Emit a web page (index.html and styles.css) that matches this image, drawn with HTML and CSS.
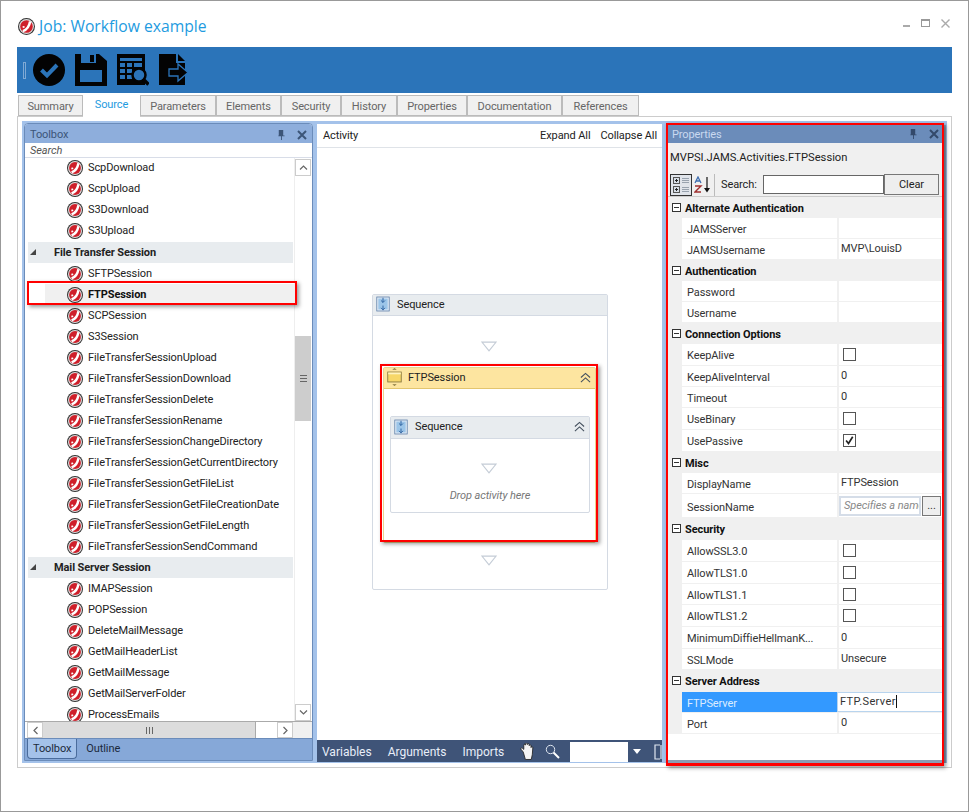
FILE: index.html
```html
<html>
    <head>
        <meta charset="utf-8">
        <title>Job: Workflow example</title>
        <link rel="stylesheet" href="styles.css">
    </head>
    <body>
        <svg class="defs" width="0" height="0">
            <symbol id="jams" viewBox="0 0 16 16">
                <circle cx="8" cy="8" r="8" fill="#333"/>
                <circle cx="8" cy="8" r="7" fill="#ddd"/>
                <circle cx="8" cy="8" r="5.900" fill="#cf1f2a"/>
                <path d="M11.400 3.200C10.800 7 9 10.800 4.600 12.400" fill="none" stroke="#fff" stroke-width="2.400"/>
                <path d="M4.400 8.600l1.800-.4" stroke="#fff" stroke-width="1.600"/>
            </symbol>
            <symbol id="seq" viewBox="0 0 18 20">
                <rect x="1" y="1" width="16" height="18" fill="#dfeaf6" stroke="#5f7fa8"/>
                <rect x="3" y="3" width="12" height="14" fill="#9cc5e8"/>
                <path d="M9 2v6M6.500 5.500L9 8l2.500-2.500M9 12v6M6.500 15L9 17.500l2.500-2.500" fill="none" stroke="#2a5f9e" stroke-width="1.200"/>
            </symbol>
            <symbol id="chev" viewBox="0 0 14 12">
                <path d="M2 6l5-4.500L12 6M2 11l5-4.500 5 4.500" fill="none" stroke="#44505e" stroke-width="1.200"/>
            </symbol>
            <symbol id="arrow" viewBox="0 0 18 12">
                <path d="M1 1h16L9 11z" fill="#fff" stroke="#c4ccd6" stroke-width="1.300"/>
            </symbol>
            <symbol id="tick" viewBox="0 0 13 13">
                <path d="M2.500 6.500l2.800 3.500 5-8" fill="none" stroke="#222" stroke-width="2"/>
            </symbol>
        </svg>

        <div class="window">
            <div class="title">
                <svg class="title_icon"><use href="#jams"/></svg>
                <span class="title_text">Job: Workflow example</span>
                <div class="win_btns">
                    <span class="win_min"></span>
                    <span class="win_max"></span>
                    <svg class="win_close" viewBox="0 0 9 9"><path d="M.500.500l8 8M8.500.500l-8 8" stroke="#aaa" stroke-width="1.400"/></svg>
                </div>
            </div>

            <div class="toolbar">
                <span class="grip"></span>
                <svg class="tool" viewBox="0 0 32 32">
                    <circle cx="16" cy="16" r="16" fill="#030303"/>
                    <path d="M8.500 16l5.500 5.500L24 11" fill="none" stroke="#2b74b9" stroke-width="4"/>
                </svg>
                <svg class="tool" viewBox="0 0 32 32">
                    <path d="M0 0h24l8 7v25H0z" fill="#030303"/>
                    <path d="M6 0h15v9H6z" fill="#2b74b9"/>
                    <path d="M15 1h4v7h-4z" fill="#030303"/>
                    <path d="M5 16h22v12H5z" fill="#2b74b9"/>
                </svg>
                <svg class="tool" viewBox="0 0 32 32">
                    <path d="M0 0h28v31H0z" fill="#030303"/>
                    <path d="M3 4h22v3H3zM3 9h5v4H3zM10 9h5v4h-5zM17 9h8v4h-8zM3 15h5v4H3zM3 21h5v4H3zM10 15h5v4h-5zM10 21h5v4h-5z" fill="#2b74b9"/>
                    <circle cx="22" cy="21" r="6.500" fill="#2b74b9" stroke="#030303" stroke-width="2.500"/>
                    <path d="M26 25l5.500 5.500" stroke="#030303" stroke-width="3.500"/>
                </svg>
                <svg class="tool tool_last" viewBox="0 0 32 32">
                    <path d="M0 0h17v9h9v22H0z" fill="#030303"/>
                    <path d="M19 0l7 7h-7z" fill="#030303"/>
                    <path d="M10 15h9v-5l10 8.500L19 27v-5h-9z" fill="#030303" stroke="#2b74b9" stroke-width="1.300"/>
                </svg>
            </div>

            <div class="tabs">
                <div class="tab" style="width:65px">Summary</div>
                <div class="tab active" style="width:57px">Source</div>
                <div class="tab" style="width:76px">Parameters</div>
                <div class="tab" style="width:65px">Elements</div>
                <div class="tab" style="width:60px">Security</div>
                <div class="tab" style="width:56px">History</div>
                <div class="tab" style="width:70px">Properties</div>
                <div class="tab" style="width:95px">Documentation</div>
                <div class="tab" style="width:77px">References</div>
            </div>

            <div class="frame">
                <div class="panes">
                    <div class="toolbox">
                        <div class="pane_head">
                            <span>Toolbox</span>
                            <svg class="pin" viewBox="0 0 9 11"><path d="M2 0h5v6h1.500v1h-3v4h-1V7h-3V6H2z" fill="#3c5578"/></svg>
                            <svg class="pane_x" viewBox="0 0 10 10"><path d="M1 1l8 8M9 1l-8 8" stroke="#3c5578" stroke-width="2"/></svg>
                        </div>
                        <div class="search">Search</div>
                        <div class="tree_wrap">
                            <div class="tree">
                                <div class="row"><svg><use href="#jams"/></svg>ScpDownload</div>
                                <div class="row"><svg><use href="#jams"/></svg>ScpUpload</div>
                                <div class="row"><svg><use href="#jams"/></svg>S3Download</div>
                                <div class="row"><svg><use href="#jams"/></svg>S3Upload</div>
                                <div class="group first"><i></i>File Transfer Session</div>
                                <div class="row"><svg><use href="#jams"/></svg>SFTPSession</div>
                                <div class="row sel"><svg><use href="#jams"/></svg>FTPSession</div>
                                <div class="row"><svg><use href="#jams"/></svg>SCPSession</div>
                                <div class="row"><svg><use href="#jams"/></svg>S3Session</div>
                                <div class="row"><svg><use href="#jams"/></svg>FileTransferSessionUpload</div>
                                <div class="row"><svg><use href="#jams"/></svg>FileTransferSessionDownload</div>
                                <div class="row"><svg><use href="#jams"/></svg>FileTransferSessionDelete</div>
                                <div class="row"><svg><use href="#jams"/></svg>FileTransferSessionRename</div>
                                <div class="row"><svg><use href="#jams"/></svg>FileTransferSessionChangeDirectory</div>
                                <div class="row"><svg><use href="#jams"/></svg>FileTransferSessionGetCurrentDirectory</div>
                                <div class="row"><svg><use href="#jams"/></svg>FileTransferSessionGetFileList</div>
                                <div class="row"><svg><use href="#jams"/></svg>FileTransferSessionGetFileCreationDate</div>
                                <div class="row"><svg><use href="#jams"/></svg>FileTransferSessionGetFileLength</div>
                                <div class="row"><svg><use href="#jams"/></svg>FileTransferSessionSendCommand</div>
                                <div class="group"><i></i>Mail Server Session</div>
                                <div class="row"><svg><use href="#jams"/></svg>IMAPSession</div>
                                <div class="row"><svg><use href="#jams"/></svg>POPSession</div>
                                <div class="row"><svg><use href="#jams"/></svg>DeleteMailMessage</div>
                                <div class="row"><svg><use href="#jams"/></svg>GetMailHeaderList</div>
                                <div class="row"><svg><use href="#jams"/></svg>GetMailMessage</div>
                                <div class="row"><svg><use href="#jams"/></svg>GetMailServerFolder</div>
                                <div class="row"><svg><use href="#jams"/></svg>ProcessEmails</div>
                            </div>
                            <div class="vscroll">
                                <div class="sbtn"><svg viewBox="0 0 9 5"><path d="M1 4.500L4.500 1 8 4.500" fill="none" stroke="#666" stroke-width="1.200"/></svg></div>
                                <div class="vthumb"><b></b></div>
                                <div class="sbtn down"><svg viewBox="0 0 9 5"><path d="M1 .500L4.500 4 8 .500" fill="none" stroke="#666" stroke-width="1.200"/></svg></div>
                            </div>
                        </div>
                        <div class="hscroll">
                            <div class="hbtn"><svg viewBox="0 0 5 9"><path d="M4.500 1L1 4.500 4.500 8" fill="none" stroke="#666" stroke-width="1.200"/></svg></div>
                            <div class="hthumb"><b></b></div>
                            <div class="hbtn right"><svg viewBox="0 0 5 9"><path d="M.500 1L4 4.500 .500 8" fill="none" stroke="#666" stroke-width="1.200"/></svg></div>
                            <div class="corner"></div>
                        </div>
                        <div class="box_tabs">
                            <div class="box_tab on">Toolbox</div>
                            <div class="box_tab">Outline</div>
                        </div>
                    </div>

                    <div class="designer">
                        <div class="des_head">
                            <span>Activity</span>
                            <span class="des_links">Expand All</span>
                            <span>Collapse All</span>
                        </div>
                        <div class="canvas">
                            <div class="card outer">
                                <div class="card_head">
                                    <svg class="seq"><use href="#seq"/></svg>Sequence
                                </div>
                                <svg class="drop top"><use href="#arrow"/></svg>
                                <div class="card ftp">
                                    <div class="card_head yellow">
                                        <svg class="box_icon" viewBox="0 0 16 20">
                                            <path d="M8 0L5.500 2h5zM8 20l-2.500-2h5z" fill="#8a7a40"/>
                                            <rect x=".5" y="4.500" width="15" height="11" fill="#f7d768" stroke="#8a7a40"/>
                                            <path d="M1 5h14v2H1z" fill="#fff3c0"/>
                                        </svg>
                                        FTPSession
                                        <svg class="chev"><use href="#chev"/></svg>
                                    </div>
                                    <div class="ftp_body">
                                        <div class="card inner">
                                            <div class="card_head">
                                                <svg class="seq"><use href="#seq"/></svg>Sequence
                                                <svg class="chev"><use href="#chev"/></svg>
                                            </div>
                                            <svg class="drop mid"><use href="#arrow"/></svg>
                                            <div class="drop_text">Drop activity here</div>
                                        </div>
                                    </div>
                                </div>
                                <svg class="drop end"><use href="#arrow"/></svg>
                            </div>
                        </div>
                        <div class="des_bar">
                            <span class="bar_var">Variables</span>
                            <span class="bar_arg">Arguments</span>
                            <span class="bar_imp">Imports</span>
                            <svg class="hand" viewBox="1 .5 13 16">
                                <path d="M3.500 9L1.500 6.500c-.8-1 .5-2 1.300-1L4 6.500V2.500c0-1.200 1.500-1.200 1.500 0V1.500c0-1.200 1.800-1.200 1.800 0V2c0-1.200 1.800-1.200 1.800 0v1c0-1 1.700-1 1.700 0v1.800c.3-1.400 1.800-1 1.700.2l-.5 6.500-1 4.500H5.500z" fill="#f4f4f4" stroke="#222" stroke-width=".8"/>
                            </svg>
                            <svg class="mag" viewBox="0 0 15 15">
                                <circle cx="5.500" cy="5.500" r="4.200" fill="none" stroke="#dfe6f0" stroke-width="1"/>
                                <path d="M8.500 8.500l5.500 5.500" stroke="#fff" stroke-width="2"/>
                            </svg>
                            <span class="zoom_box"></span>
                            <span class="zoom_arrow"></span>
                            <svg class="fit" viewBox="0 0 8 16"><path d="M6 1H1v14h5M7 1v14" fill="none" stroke="#dfe6f0" stroke-width="1.200"/></svg>
                        </div>
                    </div>

                    <div class="props">
                        <div class="pane_head dark">
                            <span>Properties</span>
                            <svg class="pin" viewBox="0 0 9 11"><path d="M2 0h5v6h1.500v1h-3v4h-1V7h-3V6H2z" fill="#33496b"/></svg>
                            <svg class="pane_x" viewBox="0 0 10 10"><path d="M1 1l8 8M9 1l-8 8" stroke="#33496b" stroke-width="2"/></svg>
                        </div>
                        <div class="prop_type">MVPSI.JAMS.Activities.FTPSession</div>
                        <div class="prop_tools">
                            <div class="cat_btn">
                                <svg viewBox="0 0 16 16">
                                    <path d="M0 0h7v7H0zM0 9h7v7H0z" fill="#555"/>
                                    <path d="M1 1h5v5H1zM1 10h5v5H1z" fill="#d7dee6"/>
                                    <path d="M2 3h3v1H2zM3 2h1v3H3zM2 12h3v1H2zM3 11h1v3H3z" fill="#222"/>
                                    <path d="M9 1h7v1H9zM9 3h7v1H9zM9 5h7v1H9zM9 10h7v1H9zM9 12h7v1H9zM9 14h7v1H9z" fill="#98a2ae"/>
                                </svg>
                            </div>
                            <svg class="az" viewBox="0 0 18 17">
                                <path d="M1 7l3-6 3 6M2 5h4" fill="none" stroke="#3f6fb0" stroke-width="1.300"/>
                                <path d="M1 10h6l-6 6h6" fill="none" stroke="#a03030" stroke-width="1.400"/>
                                <path d="M13 1v12" stroke="#111" stroke-width="1.200"/>
                                <path d="M10 12h6l-3 4.500z" fill="#111"/>
                            </svg>
                            <span class="sep"></span>
                            <span class="search_lbl">Search:</span>
                            <span class="search_box"></span>
                            <span class="clear">Clear</span>
                        </div>
                        <div class="prop_list">
                            <div class="pg"><i></i>Alternate Authentication</div>
                            <div class="pr"><span>JAMSServer</span><span></span></div>
                            <div class="pr"><span>JAMSUsername</span><span>MVP\LouisD</span></div>
                            <div class="pg"><i></i>Authentication</div>
                            <div class="pr"><span>Password</span><span></span></div>
                            <div class="pr"><span>Username</span><span></span></div>
                            <div class="pg"><i></i>Connection Options</div>
                            <div class="pr tall"><span>KeepAlive</span><span><b class="chk"></b></span></div>
                            <div class="pr"><span>KeepAliveInterval</span><span>0</span></div>
                            <div class="pr"><span>Timeout</span><span>0</span></div>
                            <div class="pr tall"><span>UseBinary</span><span><b class="chk"></b></span></div>
                            <div class="pr tall"><span>UsePassive</span><span><b class="chk"><svg><use href="#tick"/></svg></b></span></div>
                            <div class="pg"><i></i>Misc</div>
                            <div class="pr"><span>DisplayName</span><span>FTPSession</span></div>
                            <div class="pr session">
                                <span>SessionName</span>
                                <span class="sess_cell"><span class="sess_in">Specifies a name</span><span class="dots">...</span></span>
                            </div>
                            <div class="pg tall"><i></i>Security</div>
                            <div class="pr tall"><span>AllowSSL3.0</span><span><b class="chk"></b></span></div>
                            <div class="pr tall"><span>AllowTLS1.0</span><span><b class="chk"></b></span></div>
                            <div class="pr"><span>AllowTLS1.1</span><span><b class="chk"></b></span></div>
                            <div class="pr tall"><span>AllowTLS1.2</span><span><b class="chk"></b></span></div>
                            <div class="pr tall"><span>MinimumDiffieHellmanK...</span><span>0</span></div>
                            <div class="pr"><span>SSLMode</span><span>Unsecure</span></div>
                            <div class="pg tall"><i></i>Server Address</div>
                            <div class="pr editing"><span>FTPServer</span><span><em>FTP.Server</em></span></div>
                            <div class="pr"><span>Port</span><span>0</span></div>
                        </div>
                    </div>
                </div>
            </div>

            <div class="mark mark_row"></div>
            <div class="mark mark_ftp"></div>
            <div class="mark mark_props"></div>
        </div>
    </body>
</html>
```

FILE: styles.css
```css
html, body{
    margin: 0;
    padding: 0;
    background: #fff;
}
body{
    font-family: Roboto, sans-serif;
    font-size: 11px;
    letter-spacing: -.1px;
    color: #222;
    overflow: hidden;
}
.defs{
    position: absolute;
}
svg{
    display: block;
    flex: none;
}
.window{
    position: relative;
    width: 969px;
    height: 812px;
    box-sizing: border-box;
    border: 1px solid #999;
    display: flex;
    flex-direction: column;
}

/* title */
.title{
    height: 46px;
    padding: 4px 18px 0 17px;
    box-sizing: border-box;
    display: flex;
    align-items: center;
}
.title_icon{
    width: 17px;
    height: 17px;
}
.title_text{
    margin-left: 4px;
    font-family: "Open Sans", sans-serif;
    font-size: 15.700px;
    letter-spacing: 0;
    color: #1e9be0;
}
.win_btns{
    margin-left: auto;
    display: flex;
    align-items: center;
    margin-top: -6px;
}
.win_min{
    width: 7px;
    height: 2px;
    background: #aaa;
    margin-top: 6px;
}
.win_max{
    width: 7px;
    height: 5px;
    border: 1px solid #999;
    border-top-width: 2px;
    margin-left: 11px;
}
.win_close{
    width: 9px;
    height: 9px;
    margin-left: 11px;
}

/* toolbar */
.toolbar{
    height: 46px;
    margin: 0 16px;
    background: #2b74b9;
    display: flex;
    align-items: center;
    padding-left: 6px;
}
.grip{
    width: 1px;
    height: 15px;
    border: 1px solid #7fa9d4;
    margin-right: 7px;
}
.tool{
    width: 32px;
    height: 32px;
    margin-right: 10px;
}

/* tabs */
.tabs{
    display: flex;
    margin: 2px 0 0 17px;
    height: 21px;
    position: relative;
    z-index: 1;
}
.tab{
    box-sizing: border-box;
    height: 21px;
    border: 1px solid #bbb;
    background: #f0f0f0;
    color: #666;
    text-align: center;
    line-height: 21px;
}
.tab.active{
    background: #fff;
    color: #1e9be0;
    height: 24px;
    margin-top: -2px;
    border: none;
    line-height: 23px;
}

/* main frame */
.frame{
    margin: 0 16px;
    height: 652px;
    box-sizing: border-box;
    border: 1px solid #ccc;
    padding: 4px;
}
.panes{
    height: 642px;
    box-sizing: border-box;
    background: #a4c2ea;
    padding: 2px 2px 0 2px;
    display: flex;
}

/* toolbox */
.toolbox{
    width: 289px;
    height: 638px;
    flex: none;
    box-sizing: border-box;
    border: 1px solid #6b8cba;
    border-radius: 4px 4px 0 0;
    background: #fff;
    display: flex;
    flex-direction: column;
    overflow: hidden;
}
.pane_head{
    height: 19px;
    flex: none;
    box-sizing: border-box;
    background: #8eaedc;
    color: #3c5578;
    display: flex;
    align-items: center;
    padding: 2px 5px 0 5px;
}
.pane_head span{
    flex: 1;
}
.pane_head.dark{
    background: #6b8cba;
    color: #c9d9f0;
    height: 18px;
    padding-top: 0;
}
.pin{
    width: 8px;
    height: 10px;
    margin-right: 12px;
}
.pane_x{
    width: 10px;
    height: 10px;
}
.search{
    height: 15px;
    flex: none;
    box-sizing: border-box;
    border-bottom: 1px solid #d8dde8;
    padding-left: 5px;
    font-style: italic;
    line-height: 15px;
    color: #555;
}
.tree_wrap{
    height: 563px;
    flex: none;
    display: flex;
    overflow: hidden;
}
.tree{
    flex: 1;
    min-width: 0;
    margin-top: -1px;
}
.row{
    height: 21px;
    display: flex;
    align-items: center;
    padding-left: 42px;
    box-sizing: border-box;
}
.row svg{
    width: 16px;
    height: 16px;
    margin-right: 5px;
}
.row.sel{
    margin-left: 20px;
    padding-left: 22px;
    font-weight: 700;
    color: #111;
    background: #f0f0f0;
}
.group{
    height: 21px;
    margin: 0 1px 0 3px;
    padding-left: 26px;
    background: #e8ecef;
    font-weight: 700;
    color: #222;
    display: flex;
    align-items: center;
    position: relative;
}
.group.first{
    margin-top: 1px;
}
.group i{
    position: absolute;
    left: 2px;
    top: 7px;
    width: 0;
    height: 0;
    border-left: 6px solid transparent;
    border-bottom: 6px solid #444;
}
.vscroll{
    width: 17px;
    flex: none;
    margin-right: 1px;
    border-left: 1px solid #eee;
    display: flex;
    flex-direction: column;
    box-sizing: border-box;
    padding-top: 1px;
}
.sbtn{
    height: 17px;
    flex: none;
    box-sizing: border-box;
    border: 1px solid #ccc;
    display: flex;
    align-items: center;
    justify-content: center;
}
.sbtn svg{
    width: 9px;
    height: 5px;
}
.sbtn.down{
    margin-top: auto;
}
.vthumb{
    margin-top: 160px;
    height: 85px;
    flex: none;
    background: #cdcdcd;
    display: flex;
    align-items: center;
    justify-content: center;
}
.vthumb b{
    width: 7px;
    height: 7px;
    border-top: 1px solid #666;
    border-bottom: 1px solid #666;
    box-sizing: border-box;
    background: linear-gradient(#666, #666) center / 100% 1px no-repeat;
}
.hscroll{
    height: 17px;
    flex: none;
    display: flex;
    padding-left: 2px;
    border-top: 1px solid #aaa;
    box-sizing: border-box;
}
.hbtn{
    width: 16px;
    box-sizing: border-box;
    border: 1px solid #ccc;
    display: flex;
    align-items: center;
    justify-content: center;
}
.hbtn svg{
    width: 5px;
    height: 9px;
}
.hbtn.right{
    margin-left: 21px;
}
.hthumb{
    width: 213px;
    background: #dcdcdc;
    border-right: 1px solid #aaa;
    box-sizing: border-box;
    display: flex;
    align-items: center;
    justify-content: center;
}
.hthumb b{
    width: 7px;
    height: 7px;
    border-left: 1px solid #666;
    border-right: 1px solid #666;
    box-sizing: border-box;
    background: linear-gradient(#666, #666) center / 1px 100% no-repeat;
}
.corner{
    flex: 1;
    background: #f0f0f0;
}
.box_tabs{
    flex: 1;
    min-height: 0;
    background: #86a8d8;
    border-top: 1px solid #6b8cba;
    display: flex;
    padding-left: 2px;
}
.box_tab{
    height: 19px;
    line-height: 19px;
    padding: 0 5px;
    color: #1c2a3c;
}
.box_tab.on{
    background: #a4c2ea;
    border: 1px solid #4a6c9c;
    border-top: none;
    border-radius: 0 0 4px 4px;
    margin-right: 4px;
}

/* designer */
.designer{
    width: 345px;
    flex: none;
    margin: 1px 0 1px 4px;
    background: #fff;
    display: flex;
    flex-direction: column;
}
.des_head{
    height: 24px;
    flex: none;
    box-sizing: border-box;
    border-bottom: 1px solid #dfe3e8;
    display: flex;
    align-items: center;
    padding: 0 5px 0 6px;
}
.des_head span:first-child{
    flex: 1;
}
.des_links{
    margin-right: 10px;
}
.canvas{
    flex: 1;
    min-height: 0;
    padding: 146px 0 0 55px;
}
.card{
    border: 1px solid #d4dae3;
    border-radius: 2px;
    background: #fff;
    box-sizing: border-box;
    display: flow-root;
}
.outer{
    width: 236px;
    height: 296px;
}
.card_head{
    height: 21px;
    box-sizing: border-box;
    background: #e8ecef;
    border-bottom: 1px solid #d4dae3;
    display: flex;
    align-items: center;
    padding: 0 0 2px 3px;
}
.seq{
    width: 14px;
    height: 16px;
    margin-right: 7px;
}
.drop{
    width: 16px;
    height: 11px;
    margin-left: 108px;
}
.drop.top{
    margin-top: 25px;
}
.drop.end{
    margin-top: 12px;
}
.ftp{
    width: 213px;
    height: 176px;
    margin: 15px 0 0 10px;
    border-color: #e8d48f;
}
.card_head.yellow{
    background: #fde5a0;
    border-bottom: 1px solid #e3c56e;
}
.box_icon{
    width: 15px;
    height: 18px;
    margin-right: 6px;
}
.chev{
    width: 13px;
    height: 11px;
    margin: 0 3px 0 auto;
}
.ftp_body{
    padding: 27px 6px 0 6px;
}
.inner{
    width: 200px;
    height: 97px;
}
.inner .card_head{
    height: 22px;
}
.drop.mid{
    margin: 24px 0 0 90px;
}
.drop_text{
    text-align: center;
    margin-top: 15px;
    font-style: italic;
    color: #777;
}
.des_bar{
    height: 22px;
    flex: none;
    box-sizing: border-box;
    background: #3f5478;
    color: #e8eef8;
    display: flex;
    align-items: center;
    overflow: hidden;
    padding: 1px 0 0 5px;
    font-size: 12px;
    letter-spacing: 0;
}
.bar_arg{
    margin-left: 16px;
}
.bar_imp{
    margin-left: 16px;
}
.hand{
    width: 15px;
    height: 17px;
    margin-left: 16px;
}
.mag{
    width: 15px;
    height: 15px;
    margin-left: 10px;
}
.zoom_box{
    width: 58px;
    height: 20px;
    background: #fff;
    margin-left: 10px;
    flex: none;
}
.zoom_arrow{
    width: 0;
    height: 0;
    flex: none;
    border-left: 4px solid transparent;
    border-right: 4px solid transparent;
    border-top: 5px solid #fff;
    margin-left: 5px;
}
.fit{
    width: 8px;
    height: 16px;
    margin-left: 13px;
}

/* properties */
.props{
    width: 279px;
    flex: none;
    margin: 2px 0 0 5px;
    background: #fff;
    border-bottom: 3px solid #8c9cb2;
    border-right: 2px solid #8c9cb2;
    box-sizing: border-box;
    display: flex;
    flex-direction: column;
}
.prop_type{
    height: 28px;
    background: #f0f0f0;
    padding-left: 3px;
    line-height: 29px;
    flex: none;
    box-sizing: border-box;
    font-size: 11.200px;
    letter-spacing: 0;
}
.prop_tools{
    height: 26px;
    background: #f0f0f0;
    border-bottom: 1px solid #ccc;
    box-sizing: border-box;
    display: flex;
    align-items: center;
    padding: 2px 5px 0 3px;
    flex: none;
}
.cat_btn{
    width: 22px;
    height: 22px;
    box-sizing: border-box;
    border: 1px solid #333;
    background: #e0e4ea;
    display: flex;
    align-items: center;
    justify-content: center;
}
.cat_btn svg{
    width: 16px;
    height: 16px;
}
.az{
    width: 18px;
    height: 17px;
    margin-left: 2px;
}
.sep{
    width: 1px;
    height: 22px;
    background: #bbb;
    margin-left: 2px;
}
.search_lbl{
    margin-left: 6px;
}
.search_box{
    flex: 1;
    height: 19px;
    box-sizing: border-box;
    border: 1px solid #666;
    background: #fff;
    margin-left: 6px;
}
.clear{
    width: 55px;
    height: 21px;
    box-sizing: border-box;
    border: 1px solid #777;
    background: #eee;
    text-align: center;
    line-height: 19px;
}
.prop_list{
    background: linear-gradient(#f0f0f0, #f0f0f0) left top / 15px 537px no-repeat;
}
.pg{
    height: 21px;
    box-sizing: border-box;
    background: #f0f0f0;
    font-weight: 700;
    color: #111;
    display: flex;
    align-items: center;
    padding: 1px 0 0 18px;
    position: relative;
}
.pg.tall{
    height: 22px;
}
.pg i{
    position: absolute;
    left: 5px;
    top: 6px;
    width: 9px;
    height: 9px;
    box-sizing: border-box;
    border: 1px solid #333;
    background: linear-gradient(#333, #333) center / 5px 1px no-repeat #fff;
}
.pr{
    height: 21px;
    margin: 0 0 0 15px;
    box-sizing: border-box;
    border-bottom: 1px solid #f0f0f0;
    background: #fff;
    display: grid;
    grid-template-columns: 155px 1fr;
    align-items: center;
}
.pr.tall{
    height: 22px;
}
.pr.session{
    height: 24px;
}
.pr > span:first-child{
    padding: 3px 0 0 5px;
    height: 100%;
    display: flex;
    align-items: center;
    box-sizing: border-box;
    color: #333;
}
.pr.tall > span:first-child{
    padding-top: 1px;
}
.pr > span + span{
    border-left: 2px solid #f0f0f0;
    height: 100%;
    box-sizing: border-box;
    padding: 0 0 1px 2px;
    display: flex;
    align-items: center;
    overflow: hidden;
    color: #333;
}
.chk{
    width: 13px;
    height: 13px;
    box-sizing: border-box;
    border: 1px solid #555;
    margin: 1px 0 0 2px;
    background: #fff;
    display: block;
}
.chk svg{
    width: 11px;
    height: 11px;
}
.pr > span.sess_cell{
    padding: 0;
}
.sess_in{
    width: 82px;
    height: 20px;
    flex: none;
    box-sizing: border-box;
    border: 2px solid #d5dde8;
    padding-left: 3px;
    font-style: italic;
    color: #888;
    white-space: nowrap;
    overflow: hidden;
    line-height: 16px;
}
.dots{
    width: 19px;
    height: 20px;
    flex: none;
    box-sizing: border-box;
    border: 1px solid #777;
    background: #eee;
    margin-left: 1px;
    text-align: center;
    line-height: 18px;
}
.pr.editing > span:first-child{
    background: #3399ff;
    color: #dcecff;
}
.pr.editing > span + span{
    border: 1px solid #b8d4ee;
    padding-left: 2px;
}
.pr.editing em{
    font-style: normal;
    letter-spacing: .4px;
    border-right: 1px solid #111;
}

/* red annotations */
.mark{
    position: absolute;
    box-sizing: border-box;
    border: 2px solid #f00;
    box-shadow: 2px 2px 4px rgba(0, 0, 0, .4);
    pointer-events: none;
}
.mark_row{
    left: 26px;
    top: 280px;
    width: 270px;
    height: 24px;
}
.mark_ftp{
    left: 379px;
    top: 363px;
    width: 218px;
    height: 178px;
}
.mark_props{
    left: 665px;
    top: 122px;
    width: 278px;
    height: 643px;
    border-bottom-width: 3px;
}
```
